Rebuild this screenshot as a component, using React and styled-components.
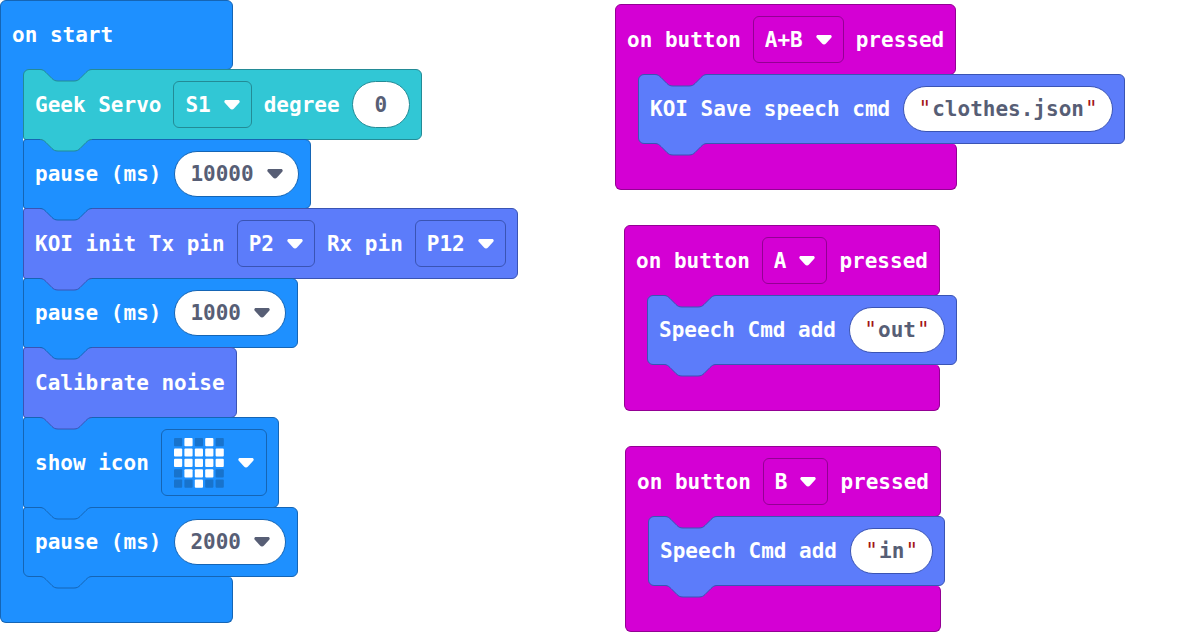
import React from "react";
import styled, { createGlobalStyle } from "styled-components";

const GlobalStyle = createGlobalStyle`
  * { box-sizing: border-box; }
  body {
    margin: 0;
    background: #ffffff;
    font: bold 21px/24px "DejaVu Sans Mono", "Liberation Mono", monospace;
  }
`;

const palette = {
  basic: { fill: "#1e90ff", line: "#1565b5" },
  servo: { fill: "#31c7d5", line: "#238b96" },
  koi: { fill: "#5c7cfa", line: "#3a54b4" },
  input: { fill: "#d400d4", line: "#940094" },
};

const Workspace = styled.main`
  display: grid;
  grid-template-columns: 205fr 195fr;
  align-items: start;
`;

const Column = styled.div`
  display: flex;
  flex-direction: column;
  align-items: flex-start;
  gap: 35px;
  padding-top: ${(p) => p.$top || 0}px;
`;

const Script = styled.section`
  display: flex;
  flex-direction: column;
  align-items: flex-start;
  margin-left: ${(p) => p.$indent || 0}px;
`;

const Hat = styled.header`
  display: flex;
  align-items: center;
  gap: 12px;
  min-width: 233px;
  min-height: 70px;
  padding: 11px;
  margin-bottom: -1px;
  color: #ffffff;
  background: ${(p) => p.$tone.fill};
  border: 1px solid ${(p) => p.$tone.line};
  border-radius: 6px 6px 6px 0;
`;

const Body = styled.div`
  position: relative;
  display: flex;
  align-self: stretch;
`;

const Spine = styled.div`
  width: 23px;
  background: ${(p) => p.$tone.fill};
  border-left: 1px solid ${(p) => p.$tone.line};
`;

const Stack = styled.div`
  position: relative;
  display: flex;
  flex-direction: column;
  align-items: flex-start;
  background:
    linear-gradient(${(p) => p.$tone.fill}, ${(p) => p.$tone.fill}) 0 0 / 6px 6px no-repeat,
    linear-gradient(${(p) => p.$tone.fill}, ${(p) => p.$tone.fill}) 0 100% / 6px 6px no-repeat;
`;

const Foot = styled.div`
  width: ${(p) => p.$width}px;
  height: 47px;
  margin-top: -1px;
  background: ${(p) => p.$tone.fill};
  border: 1px solid ${(p) => p.$tone.line};
  border-top-color: ${(p) => p.$tone.fill};
  border-radius: 0 6px 6px 6px;
`;

const Block = styled.div`
  position: relative;
  display: flex;
  align-items: center;
  gap: 12px;
  min-height: ${(p) => (p.$plain ? 71 : 70)}px;
  padding: 11px;
  white-space: nowrap;
  color: #ffffff;
  background: ${(p) => p.$tone.fill};
  border: 1px solid ${(p) => p.$tone.line};
  border-radius: 3px 6px 6px 3px;

  & + & { margin-top: -1px; }
  &:first-child { border-top-left-radius: 6px; }
  &:last-child { border-bottom-left-radius: 6px; }
`;

const TabShape = styled.svg`
  position: absolute;
  z-index: 1;
  left: 16px;
  ${(p) => (p.$edge === "top" ? "top: -1px;" : "bottom: -13px;")}
  width: 52px;
  height: 13px;
  overflow: visible;
`;

const Word = styled.label`
  white-space: nowrap;
`;

const MenuBox = styled.span`
  position: relative;
  display: flex;
  align-items: center;
`;

const Menu = styled.select`
  appearance: none;
  width: calc(${(p) => p.$chars}ch + 53px);
  height: 47px;
  margin: 0;
  padding: 0 0 0 11px;
  font: inherit;
  color: #ffffff;
  background: transparent;
  border: 1px solid ${(p) => p.$tone.line};
  border-radius: 6px;
`;

const IconMenu = styled.button`
  display: flex;
  align-items: center;
  gap: 14px;
  height: 67px;
  margin: 0;
  padding: 0 12px;
  color: #ffffff;
  background: transparent;
  border: 1px solid ${(p) => p.$tone.line};
  border-radius: 6px;
`;

const Pill = styled.span`
  display: flex;
  align-items: center;
  height: ${(p) => (p.$tall ? 47 : 46)}px;
  padding: 0 ${(p) => p.$pad}px;
  margin-left: ${(p) => (p.$tall ? 0 : 1)}px;
  color: #575e75;
  background: #ffffff;
  border: 1px solid ${(p) => p.$tone.line};
  border-radius: 24px;
`;

const Entry = styled.input`
  width: ${(p) => p.$chars}ch;
  height: 24px;
  margin: 0;
  padding: 0;
  font: inherit;
  color: inherit;
  background: none;
  border: 0;
  outline: 0;
`;

const Quote = styled.span`
  width: 15px;
  text-align: center;
  font-weight: normal;
  color: #a31515;
`;

const PillArrow = styled.span`
  display: flex;
  margin-left: 13px;
`;

const MenuArrow = styled.span`
  position: absolute;
  right: 12px;
  display: flex;
  pointer-events: none;
`;

const Arrow = () => (
  <svg width="16" height="10" viewBox="0 0 16 10" aria-hidden="true">
    <path
      d="M2 0H14C15.6 0 16.2 1.6 15.2 2.8L10 8.6C8.8 9.9 7.2 9.9 6 8.6L0.8 2.8C-0.2 1.6 0.4 0 2 0Z"
      fill="currentColor"
    />
  </svg>
);

const Tab = ({ tone, edge, line }) => (
  <TabShape $edge={edge} viewBox="0 0 52 13" aria-hidden="true">
    <path
      d="M0 0V0.5C3 0.5 4.5 2 6 3.5L12 9.5C13.5 11 15 12 18 12H34C37 12 38.5 11 40 9.5L46 3.5C47.5 2 49 0.5 52 0.5V0Z"
      fill={tone.fill}
    />
    <path
      d="M0 0.5C3 0.5 4.5 2 6 3.5L12 9.5C13.5 11 15 12 18 12H34C37 12 38.5 11 40 9.5L46 3.5C47.5 2 49 0.5 52 0.5"
      fill="none"
      stroke={line || tone.line}
    />
  </TabShape>
);

const heart = [".#.#.", "#####", "#####", ".###.", "..#.."];

const HeartIcon = () => (
  <svg width="50" height="50" viewBox="0 0 50 50" role="img" aria-label="heart">
    {heart.flatMap((row, y) =>
      [...row].map((led, x) => (
        <rect
          key={`${x}-${y}`}
          x={x * 10.4}
          y={y * 10.4}
          width="8.2"
          height="8.2"
          rx="1"
          fill={led === "#" ? "#ffffff" : "#1873cc"}
        />
      ))
    )}
  </svg>
);

const Dropdown = ({ id, tone, value }) => (
  <MenuBox>
    <Menu id={id} $tone={tone} $chars={value.length} defaultValue={value}>
      <option>{value}</option>
    </Menu>
    <MenuArrow>
      <Arrow />
    </MenuArrow>
  </MenuBox>
);

const Pause = ({ id, value }) => (
  <Block $tone={palette.basic}>
    <Word htmlFor={id}>pause (ms)</Word>
    <Pill $tone={palette.basic} $pad={15}>
      <Entry id={id} $chars={value.length} defaultValue={value} />
      <PillArrow>
        <Arrow />
      </PillArrow>
    </Pill>
    <Tab tone={palette.basic} />
  </Block>
);

const ButtonScript = ({ id, button, label, text, width, indent }) => (
  <Script $indent={indent}>
    <Hat $tone={palette.input}>
      <Word htmlFor={`${id}-button`}>on button</Word>
      <Dropdown id={`${id}-button`} tone={palette.input} value={button} />
      <span>pressed</span>
    </Hat>
    <Body>
      <Spine $tone={palette.input} />
      <Stack $tone={palette.input}>
        <Block $tone={palette.koi}>
          <Tab tone={palette.input} edge="top" line={palette.koi.line} />
          <Word htmlFor={`${id}-text`}>{label}</Word>
          <Pill $tone={palette.koi} $pad={13}>
            <Quote>"</Quote>
            <Entry id={`${id}-text`} $chars={text.length} defaultValue={text} />
            <Quote>"</Quote>
          </Pill>
          <Tab tone={palette.koi} />
        </Block>
      </Stack>
    </Body>
    <Foot $tone={palette.input} $width={width} />
  </Script>
);

export default function App() {
  return (
    <>
      <GlobalStyle />
      <Workspace>
        <Column>
          <Script>
            <Hat $tone={palette.basic}>on start</Hat>
            <Body>
              <Spine $tone={palette.basic} />
              <Stack $tone={palette.basic}>
                <Block $tone={palette.servo}>
                  <Tab tone={palette.basic} edge="top" line={palette.servo.line} />
                  <Word htmlFor="servo">Geek Servo</Word>
                  <Dropdown id="servo" tone={palette.servo} value="S1" />
                  <Word htmlFor="degree">degree</Word>
                  <Pill $tone={palette.servo} $pad={22} $tall>
                    <Entry id="degree" $chars={1} defaultValue="0" />
                  </Pill>
                  <Tab tone={palette.servo} />
                </Block>
                <Pause id="pause-1" value="10000" />
                <Block $tone={palette.koi}>
                  <Word htmlFor="tx">KOI init Tx pin</Word>
                  <Dropdown id="tx" tone={palette.koi} value="P2" />
                  <Word htmlFor="rx">Rx pin</Word>
                  <Dropdown id="rx" tone={palette.koi} value="P12" />
                  <Tab tone={palette.koi} />
                </Block>
                <Pause id="pause-2" value="1000" />
                <Block $tone={palette.koi} $plain>
                  Calibrate noise
                  <Tab tone={palette.koi} />
                </Block>
                <Block $tone={palette.basic}>
                  <Word htmlFor="icon">show icon</Word>
                  <IconMenu id="icon" type="button" $tone={palette.basic}>
                    <HeartIcon />
                    <Arrow />
                  </IconMenu>
                  <Tab tone={palette.basic} />
                </Block>
                <Pause id="pause-3" value="2000" />
              </Stack>
            </Body>
            <Foot $tone={palette.basic} $width={233} />
          </Script>
        </Column>
        <Column $top={4}>
          <ButtonScript id="ab" button="A+B" label="KOI Save speech cmd" text="clothes.json" width={342} />
          <ButtonScript id="a" button="A" label="Speech Cmd add" text="out" width={316} indent={9} />
          <ButtonScript id="b" button="B" label="Speech Cmd add" text="in" width={316} indent={10} />
        </Column>
      </Workspace>
    </>
  );
}
